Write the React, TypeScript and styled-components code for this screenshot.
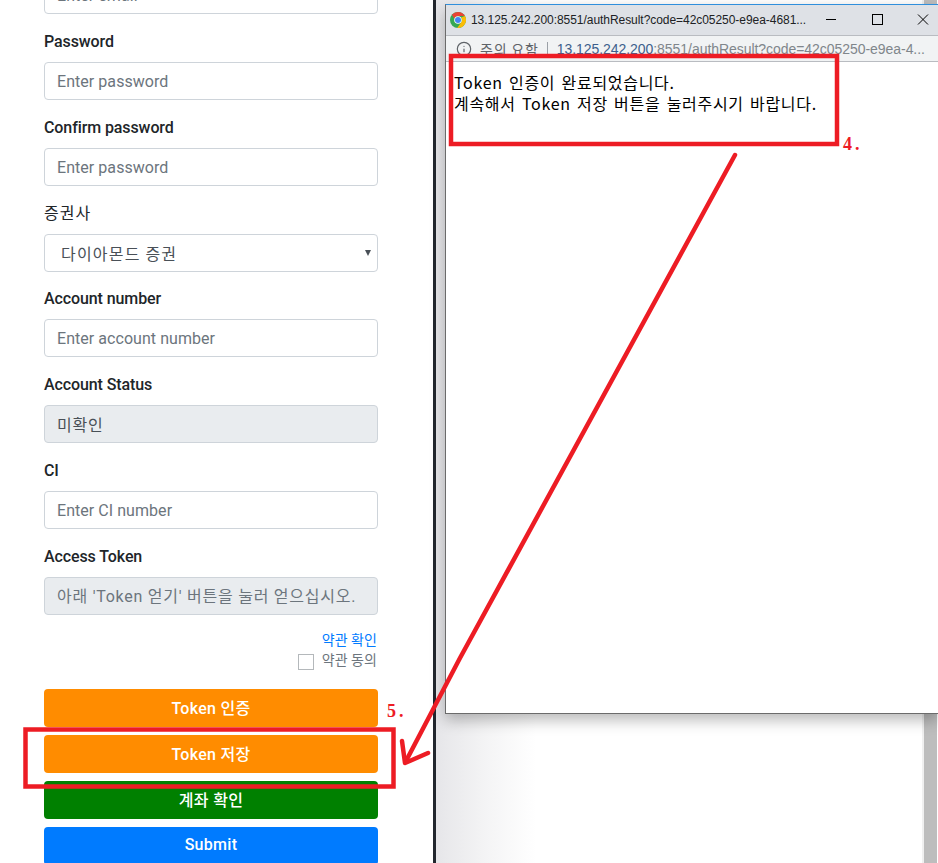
import React from "react";
import styled, { createGlobalStyle } from "styled-components";
import { Info } from "lucide-react";

const UI_FONT = `Roboto, "Noto Sans CJK KR", sans-serif`;
const KR_FONT = `"Noto Sans CJK KR", "Liberation Sans", sans-serif`;

const Global = createGlobalStyle`
  html, body { margin: 0; padding: 0; background: #fff; overflow: hidden; }
  * { box-sizing: border-box; }
`;

const Page = styled.div`
  position: relative;
  display: flex;
  width: 938px;
  height: 863px;
  overflow: hidden;
  font-family: ${UI_FONT};
`;

const FormPane = styled.div`
  flex: 0 0 433px;
  padding: 0 55px 0 44px;
  background: #fff;
`;

const Divider = styled.div`
  flex: 0 0 3px;
  background: #23272e;
`;

const Form = styled.form`
  margin-top: -24px;
`;

const Group = styled.div<{ $tight?: boolean }>`
  margin-bottom: ${(p) => (p.$tight ? "15px" : "16px")};
`;

const Label = styled.label<{ $plain?: boolean }>`
  display: block;
  margin-bottom: 8px;
  height: 24px;
  font-size: 16px;
  line-height: ${(p) => (p.$plain ? "20px" : "24px")};
  letter-spacing: ${(p) => (p.$plain ? "1px" : "-0.1px")};
  font-weight: ${(p) => (p.$plain ? 400 : 500)};
  color: #212529;
  font-family: ${(p) => (p.$plain ? KR_FONT : UI_FONT)};
`;

const Input = styled.input<{ $hangul?: boolean }>`
  display: block;
  width: 100%;
  height: 38px;
  padding: 6px 12px;
  font-family: ${UI_FONT};
  font-size: 16px;
  letter-spacing: ${(p) => (p.$hangul ? "0.75px" : "0.05px")};
  color: #495057;
  background: ${(p) => (p.readOnly ? "#e9ecef" : "#fff")};
  border: 1px solid #ced4da;
  border-radius: 4px;
  outline: none;
  &::placeholder { color: #6c757d; opacity: 1; }
`;

const SelectWrap = styled.div`
  position: relative;
`;

const Select = styled.select`
  display: block;
  width: 100%;
  height: 38px;
  padding: 6px 12px 6px 16px;
  appearance: none;
  font-family: ${KR_FONT};
  font-size: 16px;
  letter-spacing: 1.2px;
  color: #495057;
  background: #fff;
  border: 1px solid #ced4da;
  border-radius: 4px;
  outline: none;
`;

const SelectArrow = styled.span`
  position: absolute;
  right: 7px;
  top: 16px;
  width: 0;
  height: 0;
  border-left: 3px solid transparent;
  border-right: 3px solid transparent;
  border-top: 6px solid #495057;
`;

const Terms = styled.div`
  display: flex;
  flex-direction: column;
  align-items: flex-end;
  padding-right: 1px;
  margin-top: -1px;
  margin-bottom: 19px;
  font-family: ${KR_FONT};
  font-size: 14px;
  line-height: 18px;
  letter-spacing: 0.1px;
`;

const TermsLink = styled.a`
  color: #007bff;
  text-decoration: none;
  height: 18px;
`;

const Agree = styled.label`
  display: flex;
  align-items: flex-start;
  gap: 8px;
  margin-top: 3px;
  line-height: 16px;
  color: #6c757d;
`;

const Check = styled.input`
  appearance: none;
  width: 16px;
  height: 16px;
  margin: 3px 0 0;
  background: #fff;
  border: 1px solid #b4b8bb;
`;

const Buttons = styled.div`
  display: flex;
  flex-direction: column;
  gap: 8px;
`;

const Button = styled.button<{ $bg: string }>`
  display: block;
  width: 100%;
  height: 38px;
  flex: none;
  padding: 0 12px 3px;
  border: 0;
  border-radius: 4px;
  background: ${(p) => p.$bg};
  color: #fff;
  font-family: ${UI_FONT};
  font-size: 16px;
  font-weight: 500;
  letter-spacing: 0.3px;
`;

const DesktopPane = styled.div`
  position: relative;
  flex: 1;
  display: flex;
  justify-content: flex-end;
  background: linear-gradient(to right, #e6e6e9 0, #f4f4f5 50px, #fff 100px);
`;

const PageScroll = styled.div`
  width: 16px;
  height: 100%;
  border-left: 2px solid #f0f0f0;
  border-right: 1px solid #fff;
  background: #bdbdbd;
`;

const Popup = styled.div`
  position: absolute;
  left: 9px;
  top: 4px;
  right: 0;
  height: 710px;
  display: flex;
  flex-direction: column;
  background: #fff;
  border: 1px solid #6b6b6b;
  border-top-color: #2f8fdc;
  border-right: 0;
  box-shadow: 0 6px 14px rgba(0, 0, 0, 0.28);
`;

const TitleBar = styled.div`
  flex: 0 0 30px;
  display: flex;
  align-items: center;
  padding-left: 4px;
  background: #dee1e6;
`;

const LogoSlot = styled.span`
  display: flex;
  flex: none;
`;

const TitleText = styled.span`
  margin-left: 5px;
  flex: none;
  width: 337px;
  font-family: "Liberation Sans", sans-serif;
  font-size: 12px;
  letter-spacing: -0.05px;
  color: #202124;
  white-space: nowrap;
`;

const WindowControls = styled.div`
  display: flex;
  align-items: center;
  margin-left: auto;
  margin-right: -8px;
  flex: none;
`;

const ControlSlot = styled.span`
  display: flex;
  align-items: center;
  justify-content: center;
  width: 46px;
  height: 30px;
`;

const AddressBar = styled.div`
  flex: 0 0 27px;
  display: flex;
  align-items: center;
  padding-left: 10px;
  background: #f1f3f4;
  border-top: 1px solid #b9bcc1;
  border-bottom: 1px solid #b9bcc1;
  color: #5f6368;
  white-space: nowrap;
  overflow: hidden;
`;

const WarnText = styled.span`
  margin-left: 8px;
  font-family: ${KR_FONT};
  font-size: 14px;
  letter-spacing: 0.8px;
  color: #5f6368;
`;

const Sep = styled.span`
  flex: none;
  width: 1px;
  height: 14px;
  margin: 0 9px 0 8px;
  background: #9aa0a6;
`;

const Url = styled.span`
  font-family: "Liberation Sans", sans-serif;
  font-size: 14px;
  letter-spacing: -0.05px;
  color: #80868b;
`;

const Host = styled.span`
  color: #3d5f8c;
`;

const PopupBody = styled.div`
  padding: 10px 8px;
  font-family: ${KR_FONT};
  font-size: 16px;
  line-height: 21px;
  letter-spacing: 0.7px;
  word-spacing: 2px;
  color: #000;
`;

const Markup = styled.svg`
  position: absolute;
  left: 0;
  top: 0;
  width: 938px;
  height: 863px;
  pointer-events: none;
`;

const StepNumber = styled.span<{ $x: number; $y: number }>`
  position: absolute;
  left: ${(p) => p.$x}px;
  top: ${(p) => p.$y}px;
  font-family: "Liberation Serif", serif;
  font-size: 18px;
  font-weight: 700;
  line-height: 20px;
  letter-spacing: 3px;
  color: #ed1c24;
`;

const ChromeLogo = () => (
  <svg width="16" height="16" viewBox="0 0 16 16" aria-hidden="true">
    <circle cx="8" cy="8" r="8" fill="#34a853" />
    <path d="M8 0a8 8 0 0 1 6.93 4H8a4 4 0 0 0-3.7 2.5L1.9 2.8A8 8 0 0 1 8 0z" fill="#ea4335" />
    <path d="M14.93 4A8 8 0 0 1 7.2 15.96L10.9 10.7A4 4 0 0 0 11 5.4L14.93 4z" fill="#fbbc05" />
    <circle cx="8" cy="8" r="3.8" fill="#fff" />
    <circle cx="8" cy="8" r="3" fill="#4285f4" />
  </svg>
);

const MinIcon = () => (
  <svg width="12" height="12" viewBox="0 0 12 12"><path d="M1 5.5h10" stroke="#000" strokeWidth="1" /></svg>
);
const MaxIcon = () => (
  <svg width="12" height="12" viewBox="0 0 12 12"><rect x="1.5" y="0.5" width="10" height="10" fill="none" stroke="#000" /></svg>
);
const CloseIcon = () => (
  <svg width="12" height="12" viewBox="0 0 12 12"><path d="M1 0.5l10 10M11 0.5L1 10.5" stroke="#000" strokeWidth="1" /></svg>
);

export default function App() {
  return (
    <>
      <Global />
      <Page>
        <FormPane>
          <Form onSubmit={(e) => e.preventDefault()}>
            <Group>
              <Input placeholder="Enter email" />
            </Group>
            <Group>
              <Label>Password</Label>
              <Input type="password" placeholder="Enter password" />
            </Group>
            <Group>
              <Label>Confirm password</Label>
              <Input type="password" placeholder="Enter password" />
            </Group>
            <Group $tight>
              <Label $plain>증권사</Label>
              <SelectWrap>
                <Select defaultValue="diamond">
                  <option value="diamond">다이아몬드 증권</option>
                </Select>
                <SelectArrow />
              </SelectWrap>
            </Group>
            <Group>
              <Label>Account number</Label>
              <Input placeholder="Enter account number" />
            </Group>
            <Group>
              <Label>Account Status</Label>
              <Input readOnly $hangul value="미확인" />
            </Group>
            <Group>
              <Label>CI</Label>
              <Input placeholder="Enter CI number" />
            </Group>
            <Group>
              <Label>Access Token</Label>
              <Input readOnly $hangul placeholder="아래 'Token 얻기' 버튼을 눌러 얻으십시오." />
            </Group>
            <Terms>
              <TermsLink href="#">약관 확인</TermsLink>
              <Agree>
                <Check type="checkbox" />
                약관 동의
              </Agree>
            </Terms>
            <Buttons>
              <Button $bg="#ff8c00">Token 인증</Button>
              <Button $bg="#ff8c00">Token 저장</Button>
              <Button $bg="#008000">계좌 확인</Button>
              <Button $bg="#007bff">Submit</Button>
            </Buttons>
          </Form>
        </FormPane>
        <Divider />
        <DesktopPane>
          <PageScroll />
          <Popup>
            <TitleBar>
              <LogoSlot><ChromeLogo /></LogoSlot>
              <TitleText>13.125.242.200:8551/authResult?code=42c05250-e9ea-4681...</TitleText>
              <WindowControls>
                <ControlSlot><MinIcon /></ControlSlot>
                <ControlSlot><MaxIcon /></ControlSlot>
                <ControlSlot><CloseIcon /></ControlSlot>
              </WindowControls>
            </TitleBar>
            <AddressBar>
              <Info size={16} color="#5f6368" strokeWidth={1.8} style={{ flex: "none" }} />
              <WarnText>주의 요함</WarnText>
              <Sep />
              <Url>
                <Host>13.125.242.200</Host>:8551/authResult?code=42c05250-e9ea-4...
              </Url>
            </AddressBar>
            <PopupBody>
              Token 인증이 완료되었습니다.
              <br />
              계속해서 Token 저장 버튼을 눌러주시기 바랍니다.
            </PopupBody>
          </Popup>
        </DesktopPane>
        <Markup viewBox="0 0 938 863" aria-hidden="true">
          <rect x="451" y="56" width="386" height="88" fill="none" stroke="#ed1c24" strokeWidth="4.5" />
          <rect x="25.5" y="729.5" width="368" height="57" fill="none" stroke="#ed1c24" strokeWidth="4.5" />
          <path d="M735 155 L460 658 L406 761" fill="none" stroke="#ed1c24" strokeWidth="4.5" strokeLinecap="round" />
          <path d="M402 741 L405 763 L428 753" fill="none" stroke="#ed1c24" strokeWidth="4.5" strokeLinecap="round" strokeLinejoin="round" />
        </Markup>
        <StepNumber $x={843} $y={134}>4.</StepNumber>
        <StepNumber $x={387} $y={701}>5.</StepNumber>
      </Page>
    </>
  );
}
